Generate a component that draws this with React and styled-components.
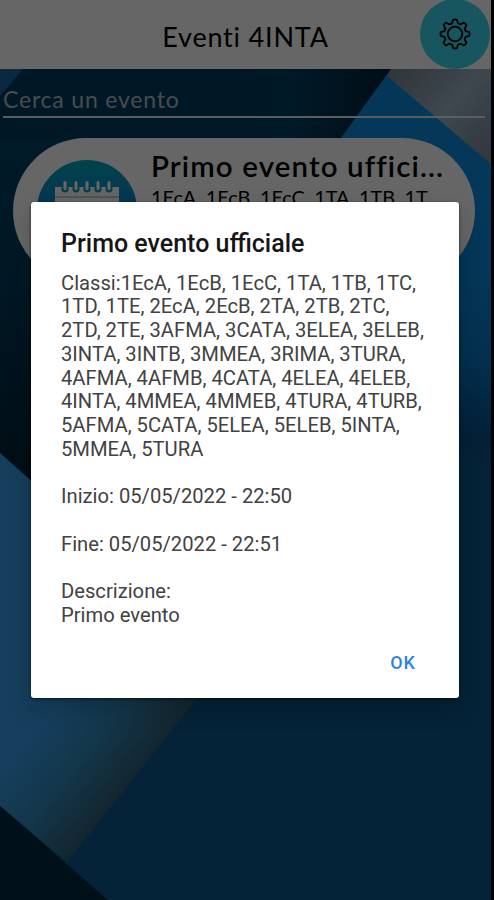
import React, { useState } from 'react';
import styled, { createGlobalStyle } from 'styled-components';

const GlobalStyle = createGlobalStyle`
* {
    box-sizing: border-box;
}
body {
    margin: 0;
    background: #000;
    overflow: hidden;
}
h1, h2, h3, p {
    margin: 0;
    font-weight: 400;
}
`

const Screen = styled.div`
position: relative;
width: 491px;
height: 900px;
overflow: hidden;
font-family: Lato, sans-serif;
color: #000;
`
const Wallpaper = styled.svg`
position: absolute;
top: 0;
left: 0;
z-index: -1;
`
const Header = styled.header`
display: grid;
grid-template-columns: 70px 1fr 70px;
align-items: center;
height: 69px;
background: #fff;
`
const HeaderTitle = styled.h1`
grid-column: 2;
padding-top: 4px;
text-align: center;
white-space: nowrap;
font-size: 27px;
line-height: 34px;
letter-spacing: 0.8px;
`
const SettingsButton = styled.button`
display: flex;
align-items: center;
justify-content: center;
width: 70px;
height: 70px;
margin: -2px 0 0 -1px;
padding: 0;
border: 0;
border-radius: 50%;
background: #3ad8ee;
`
const SearchField = styled.div`
display: flex;
align-items: center;
height: 49px;
margin: 0 6px 0 3px;
padding-top: 13px;
border-bottom: 2px solid #e4e8ec;
`
const SearchInput = styled.input`
width: 100%;
padding: 0;
border: 0;
background: transparent;
font-family: Lato, sans-serif;
font-size: 23px;
letter-spacing: 0.8px;
&::placeholder{
    color: #b4bbc0;
    opacity: 1;
}
`
const EventCard = styled.article`
display: flex;
width: 462px;
height: 146px;
margin: 20px 0 0 13px;
padding: 11px 28px 0 24px;
border-radius: 73px;
background: #fff;
`
const EventIcon = styled.svg`
flex: none;
margin-top: 11px;
`
const EventInfo = styled.div`
min-width: 0;
padding-left: 14px;
`
const EventName = styled.h3`
white-space: nowrap;
font-size: 29.5px;
font-weight: 600;
line-height: 34px;
letter-spacing: 1.1px;
`
const EventClasses = styled.p`
white-space: nowrap;
font-size: 19.8px;
line-height: 28px;
`
const Scrim = styled.div`
position: absolute;
inset: 0;
display: flex;
align-items: flex-start;
padding: 202px 0 0 31px;
background: rgba(0,0,0,0.6);
`
const Dialog = styled.section`
display: flex;
flex-direction: column;
width: 428px;
height: 496px;
padding: 27px 30px 19px;
border-radius: 3px;
background: #fff;
box-shadow: 0 1px 3px rgba(0,0,0,0.6), 0 10px 24px rgba(0,0,0,0.2);
font-family: Roboto, sans-serif;
`
const DialogTitle = styled.h2`
font-size: 25px;
font-weight: 500;
line-height: 30px;
white-space: nowrap;
color: #161616;
`
const DialogText = styled.p`
padding-top: 12.6px;
white-space: pre;
font-size: 20.2px;
line-height: 23.75px;
color: #424242;
`
const OkButton = styled.button`
align-self: flex-end;
margin: auto 13px 0 0;
padding: 0;
border: 0;
background: transparent;
font-family: Roboto, sans-serif;
font-size: 18px;
font-weight: 500;
line-height: 32px;
letter-spacing: 1px;
color: #2a86dc;
`

const details = `Classi:1EcA, 1EcB, 1EcC, 1TA, 1TB, 1TC,
1TD, 1TE, 2EcA, 2EcB, 2TA, 2TB, 2TC,
2TD, 2TE, 3AFMA, 3CATA, 3ELEA, 3ELEB,
3INTA, 3INTB, 3MMEA, 3RIMA, 3TURA,
4AFMA, 4AFMB, 4CATA, 4ELEA, 4ELEB,
4INTA, 4MMEA, 4MMEB, 4TURA, 4TURB,
5AFMA, 5CATA, 5ELEA, 5ELEB, 5INTA,
5MMEA, 5TURA

Inizio: 05/05/2022 - 22:50

Fine: 05/05/2022 - 22:51

Descrizione:
Primo evento`

// eight round teeth, alternating with shallow notches
const gearPath = () => {
    const points = [];
    for (let i = 0; i <= 96; i++) {
        const a = (i / 96) * Math.PI * 2;
        const r = 12.7 + 1.8 * Math.tanh(3 * Math.cos(8 * a));
        points.push(`${(16 + r * Math.sin(a)).toFixed(2)} ${(16 - r * Math.cos(a)).toFixed(2)}`);
    }
    return `M${points.join('L')}Z`;
}

const Gear = () => (
    <svg width="32" height="32" viewBox="0 0 32 32" fill="none" stroke="#000" strokeWidth="1.8" strokeLinejoin="round">
        <path d={gearPath()} />
        <circle cx="16" cy="16" r="7.3" />
    </svg>
)

const Background = () => (
    <Wallpaper width="491" height="900" viewBox="0 0 491 900">
        <defs>
            <linearGradient id="top" x1="0" y1="0" x2="1" y2="0">
                <stop offset="0" stopColor="#003b5c" />
                <stop offset="0.6" stopColor="#003f60" />
                <stop offset="0.8" stopColor="#002238" />
            </linearGradient>
            <linearGradient id="shade" x1="0" y1="0" x2="0" y2="1">
                <stop offset="0" stopColor="#004264" />
                <stop offset="0.4" stopColor="#003b5c" />
                <stop offset="1" stopColor="#001f30" />
            </linearGradient>
            <linearGradient id="right" x1="0" y1="70" x2="0" y2="470" gradientUnits="userSpaceOnUse">
                <stop offset="0" stopColor="#0a88dc" />
                <stop offset="0.5" stopColor="#0a8bdc" />
                <stop offset="0.72" stopColor="#0a78c4" />
                <stop offset="0.92" stopColor="#08508a" />
                <stop offset="1" stopColor="#0c588c" />
            </linearGradient>
            <linearGradient id="corner" x1="395" y1="70" x2="491" y2="155" gradientUnits="userSpaceOnUse">
                <stop offset="0" stopColor="#7a8792" />
                <stop offset="0.5" stopColor="#9cb4c6" />
                <stop offset="1" stopColor="#7c8c9c" />
            </linearGradient>
            <linearGradient id="left" x1="50" y1="717" x2="130" y2="781" gradientUnits="userSpaceOnUse">
                <stop offset="0" stopColor="#359de9" />
                <stop offset="0.5" stopColor="#3088b8" />
                <stop offset="1" stopColor="#306078" />
            </linearGradient>
        </defs>
        <rect width="491" height="900" fill="#0c588c" />
        <rect width="491" height="140" fill="url(#top)" />
        <path d="M0 138H330L220 500H0Z" fill="url(#shade)" />
        <path d="M0 69H23L0 96Z" fill="#1d64a4" />
        <path d="M391 69H491V470H100Z" fill="url(#right)" />
        <path d="M391 69H491V164L387 76Z" fill="url(#corner)" />
        <path d="M0 453L230 657L67 862L0 806Z" fill="url(#left)" />
        <path d="M0 806L108 900H0Z" fill="#00283c" />
    </Wallpaper>
)

const CalendarIcon = () => (
    <EventIcon width="100" height="100" viewBox="0 0 100 100">
        <defs>
            <linearGradient id="disc" x1="0" y1="0" x2="0" y2="1">
                <stop offset="0" stopColor="#00a8ba" />
                <stop offset="0.4" stopColor="#1088cc" />
                <stop offset="1" stopColor="#063f9a" />
            </linearGradient>
        </defs>
        <circle cx="50" cy="50" r="50" fill="url(#disc)" />
        <rect x="18" y="27" width="64" height="50" fill="#fff" />
        {[28, 39, 50, 61, 72].map(x => (
            <g key={x}>
                <circle cx={x} cy="29" r="3.6" fill="#1a9cbb" />
                <rect x={x - 1.5} y="21" width="3" height="9" rx="1.5" fill="#fff" />
            </g>
        ))}
        <path d="M18 37H82" stroke="#9bc7d3" strokeWidth="1.5" />
    </EventIcon>
)

const App = () => {
    const [ open, setOpen ] = useState(true);

    return (
        <>
            <GlobalStyle />
            <Screen>
                <Background />
                <Header>
                    <HeaderTitle>Eventi 4INTA</HeaderTitle>
                    <SettingsButton aria-label="Impostazioni"><Gear /></SettingsButton>
                </Header>
                <SearchField>
                    <SearchInput placeholder="Cerca un evento" />
                </SearchField>
                <EventCard onClick={() => setOpen(true)}>
                    <CalendarIcon />
                    <EventInfo>
                        <EventName>Primo evento uffici...</EventName>
                        <EventClasses>1EcA, 1EcB, 1EcC, 1TA, 1TB, 1T</EventClasses>
                    </EventInfo>
                </EventCard>
                {open && (
                    <Scrim>
                        <Dialog role="dialog">
                            <DialogTitle>Primo evento ufficiale</DialogTitle>
                            <DialogText>{details}</DialogText>
                            <OkButton onClick={() => setOpen(false)}>OK</OkButton>
                        </Dialog>
                    </Scrim>
                )}
            </Screen>
        </>
    );
};

export default App;
